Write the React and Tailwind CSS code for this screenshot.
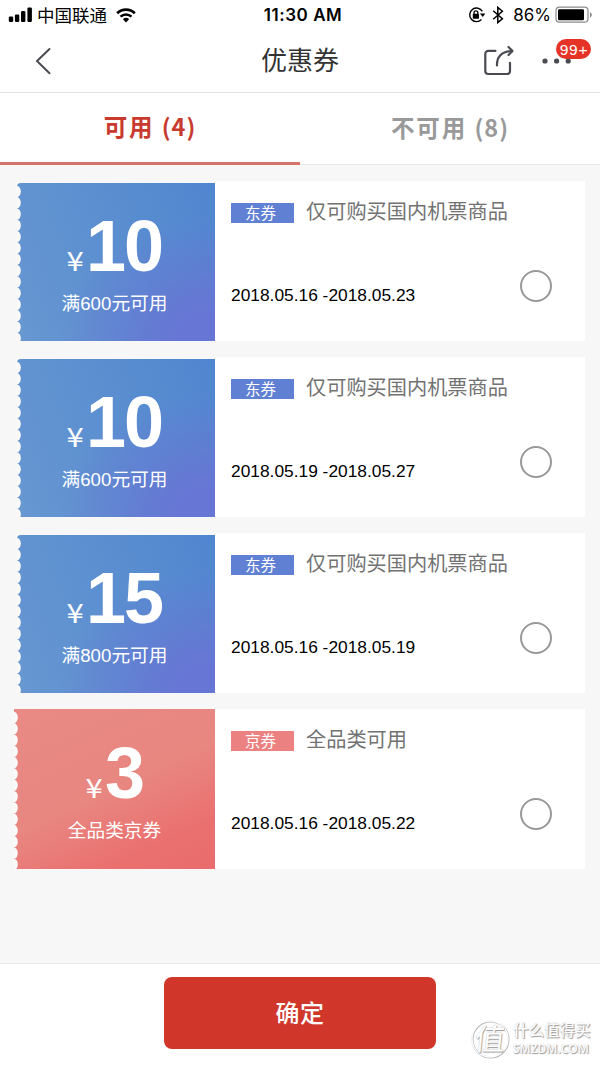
import React, { useState } from 'react';

const coupons = [
  { id: 1, kind: 'dong', amount: '10', rule: '满600元可用', tag: '东券', title: '仅可购买国内机票商品', date: '2018.05.16 -2018.05.23' },
  { id: 2, kind: 'dong', amount: '10', rule: '满600元可用', tag: '东券', title: '仅可购买国内机票商品', date: '2018.05.19 -2018.05.27' },
  { id: 3, kind: 'dong', amount: '15', rule: '满800元可用', tag: '东券', title: '仅可购买国内机票商品', date: '2018.05.16 -2018.05.19' },
  { id: 4, kind: 'jing', amount: '3', rule: '全品类京券', tag: '京券', title: '全品类可用', date: '2018.05.16 -2018.05.22' },
];

const ticketStyles = {
  dong: 'ml-[17px] mt-[2px] w-[198px] h-[158px] pt-[28px] pr-[3px] rounded-tl-[4px] bg-[radial-gradient(ellipse_at_100%_100%,#6776d4_0%,#6776d4_14%,#6776d400_56%),linear-gradient(70deg,#6897d1_0%,#5b8fd0_50%,#5086cf_100%)]',
  jing: 'ml-[14px] w-[201px] h-[160px] pt-[29px] bg-[linear-gradient(155deg,#e98a84_0%,#e88680_50%,#ea706f_80%,#ea6c6e_100%)]',
};

const tagStyles = {
  dong: 'bg-[#5f80d3]',
  jing: 'bg-[#eb8281]',
};

function StatusBar() {
  return (
    <div className="h-[30px] flex items-center justify-between pl-[8px] pr-[7px] text-black">
      <div className="flex items-center w-[200px]">
        <svg width="25" height="16" viewBox="0 0 25 16" fill="#000">
          <rect x="0.8" y="9.5" width="4.4" height="5.5" rx="1.2" />
          <rect x="6.9" y="7.5" width="4.4" height="7.5" rx="1.2" />
          <rect x="13" y="4" width="4.4" height="11" rx="1.2" />
          <rect x="19.4" y="0.5" width="4.5" height="14.5" rx="1.2" />
        </svg>
        <span className="ml-[4px] text-[17.5px] leading-none -mt-px">中国联通</span>
        <svg className="ml-[9px]" width="20" height="15" viewBox="0 0 20 15">
          <path d="M1.2 5.2a12.6 12.6 0 0 1 17.6 0" fill="none" stroke="#000" strokeWidth="2.7" />
          <path d="M4.5 8.7a7.9 7.9 0 0 1 11 0" fill="none" stroke="#000" strokeWidth="2.5" />
          <path d="M6.9 11.2a4.5 4.5 0 0 1 6.2 0L10 14.5z" fill="#000" />
        </svg>
      </div>
      <div className="pl-[5px] pt-[2px] font-['Inter','Liberation_Sans',sans-serif] font-semibold text-[17px] tracking-[0.55px] whitespace-nowrap">11:30 AM</div>
      <div className="flex items-center justify-end w-[200px]">
        <svg width="18" height="18" viewBox="0 0 18 18">
          <path d="M14.4 5.4A6.8 6.8 0 1 0 13.4 13.6" fill="none" stroke="#000" strokeWidth="1.4" />
          <path d="M11.8 7.4h5.6L14.8 11z" fill="#000" />
          <rect x="4.8" y="7.8" width="6.2" height="4.9" rx="0.6" fill="#000" />
          <path d="M6 8V6.8a1.9 1.9 0 0 1 3.8 0V8" fill="none" stroke="#000" strokeWidth="1.3" />
        </svg>
        <svg className="ml-[6px]" width="12" height="18" viewBox="0 0 12 18" fill="none" stroke="#000" strokeWidth="1.5">
          <path d="M1.2 4.8l9.2 8-4.6 3.8V1.4l4.6 3.8-9.2 8" />
        </svg>
        <span className="ml-[9px] pt-px font-['Inter','Liberation_Sans',sans-serif] text-[17px]">86%</span>
        <svg className="ml-[4px]" width="38" height="18" viewBox="0 0 38 18">
          <rect x="1" y="1.2" width="32" height="15" rx="3.4" fill="none" stroke="#8c8c8c" strokeWidth="1.2" />
          <rect x="3" y="3.2" width="26" height="11" rx="1.2" fill="#000" />
          <path d="M35 6.2c2.4 1 2.4 4.2 0 5.2z" fill="#8c8c8c" />
        </svg>
      </div>
    </div>
  );
}

function NavBar() {
  return (
    <div className="h-[63px] border-b border-[#e3e3e3] flex items-center justify-between">
      <div className="w-[150px] pl-[34px]">
        <svg width="18" height="28" viewBox="0 0 18 28" fill="none" stroke="#4a4b52" strokeWidth="2">
          <path d="M15.5 2L3 14l12.5 12.3" strokeLinecap="round" />
        </svg>
      </div>
      <h1 className="text-[26px] leading-none text-[#333] -mt-[4px]">优惠券</h1>
      <div className="w-[150px] relative flex items-center pl-[33px]">
        <svg width="32" height="32" viewBox="0 0 32 32" fill="none" stroke="#4a4b52" strokeWidth="2.2" strokeLinecap="round">
          <path d="M12.5 5.8H5.3a3 3 0 0 0-3 3V26a3 3 0 0 0 3 3H24a3 3 0 0 0 3-3V17.8" />
          <path d="M14 20.5C13.6 12 18.5 6.3 28.6 6" />
          <path d="M25.5 2L29.5 6l-4 4" strokeLinejoin="round" />
        </svg>
        <svg className="ml-[26px]" width="32" height="6" viewBox="0 0 32 6" fill="#4a4b52">
          <circle cx="4" cy="3" r="2.6" />
          <circle cx="15.6" cy="3" r="2.6" />
          <circle cx="27.2" cy="3" r="2.6" />
        </svg>
        <span className="absolute left-[106px] top-[-6px] w-[35px] h-[20px] pl-px rounded-full bg-[#e53427] text-white text-center leading-[21px] font-['Liberation_Sans',Arial,sans-serif] text-[15.5px] tracking-[0.7px]">
          99+
        </span>
      </div>
    </div>
  );
}

function Tabs({ active, onChange }) {
  const base = 'flex-1 text-[23.5px] font-bold tracking-[1.9px] leading-none';
  const on = 'h-[72px] pb-[2px] -mb-px text-[#c93a2e] border-b-[3px] border-[#d6736a]';
  const off = 'h-full pb-[2px] text-[#999]';
  return (
    <div className="h-[72px] flex border-b border-[#e9e9e9] bg-white">
      <button className={`${base} ${active === 'usable' ? on : off}`} onClick={() => onChange('usable')}>
        可用 <span className="tracking-[1px]">(4)</span>
      </button>
      <button className={`${base} ${active === 'unusable' ? on : off}`} onClick={() => onChange('unusable')}>
        不可用 <span className="tracking-[1px]">(8)</span>
      </button>
    </div>
  );
}

// Perforated left edge of a coupon
function Perforation() {
  const holes = Array.from({ length: 14 }, (_, i) => 8.5 + i * 11.3);
  return (
    <svg className="absolute left-0 top-0" width="5" height="160" viewBox="0 0 5 160" fill="#f9f9f9">
      {holes.map((y) => (
        <ellipse key={y} cx="-0.4" cy={y} rx="4.2" ry="5.7" />
      ))}
    </svg>
  );
}

function Coupon({ item, checked, onSelect }) {
  return (
    <div className="h-[160px] flex pr-[15px]">
      <div className={`relative shrink-0 overflow-hidden text-white flex flex-col items-center ${ticketStyles[item.kind]}`}>
        <Perforation />
        <div className="flex items-baseline leading-none">
          <span className="text-[27px] leading-none w-[20px] mr-px -ml-[2px] flex justify-center scale-x-115">¥</span>
          <span className="font-['Liberation_Sans',Arial,sans-serif] font-bold text-[72px] leading-[70px] tracking-[-2px]">{item.amount}</span>
        </div>
        <div className="mt-[12px] font-['Liberation_Sans','Noto_Sans_CJK_SC',sans-serif] text-[18.7px] leading-[22px]">{item.rule}</div>
      </div>
      <div className="flex-1 bg-white flex flex-col pl-[16px] pt-[16px]">
        <div className="flex items-center h-[28px]">
          <span className={`w-[63px] h-[20px] text-white text-[15.5px] leading-[18px] text-center pr-[4px] mt-[3px] ${tagStyles[item.kind]}`}>
            {item.tag}
          </span>
          <span className="ml-[12px] text-[20.2px] leading-none text-[#727272]">{item.title}</span>
        </div>
        <div className="flex justify-between items-start pr-[33px] mt-[44px]">
          <span className="font-['Liberation_Sans',Arial,sans-serif] text-[17.35px] leading-[20px] mt-[16px] text-black">{item.date}</span>
          <button
            className={`w-[32px] h-[32px] mt-[0.5px] rounded-full border-2 border-[#999] ${checked ? 'bg-[#d0372a]' : 'bg-white'}`}
            onClick={onSelect}
            aria-label={item.title}
          />
        </div>
      </div>
    </div>
  );
}

function Watermark() {
  return (
    <div className="absolute left-[470px] top-[54px] w-[130px] h-[42px] flex items-center text-[#fdfdfd] [text-shadow:1px_1px_1px_#999,0_0_1px_#bbb]">
      <div className="relative w-[40px] h-[40px] flex items-center justify-center">
        <svg className="absolute inset-0" width="40" height="40" viewBox="0 0 40 40" fill="none">
          <circle cx="20.5" cy="20.5" r="18" stroke="#b5b5b5" strokeWidth="2" />
          <circle cx="20" cy="20" r="18" stroke="#fff" strokeWidth="1.4" />
        </svg>
        <span className="relative text-[30px] leading-none -skew-x-6 -mt-[4px]">值</span>
      </div>
      <div className="ml-[3px]">
        <div className="text-[15.5px] leading-[19px] font-medium whitespace-nowrap">什么值得买</div>
        <div className="font-['Open_Sans','Liberation_Sans',sans-serif] font-semibold text-[12px] leading-[20px] whitespace-nowrap">SMZDM.COM</div>
      </div>
    </div>
  );
}

export default function App() {
  const [tab, setTab] = useState('usable');
  const [selected, setSelected] = useState(null);

  return (
    <div className="w-[600px] h-[1067px] overflow-hidden bg-white flex flex-col font-['Noto_Sans_CJK_SC',sans-serif]">
      <StatusBar />
      <NavBar />
      <Tabs active={tab} onChange={setTab} />

      <div className="flex-1 bg-[#f7f7f7] pt-[16px] flex flex-col gap-[16px]">
        {coupons.map((item) => (
          <Coupon
            key={item.id}
            item={item}
            checked={selected === item.id}
            onSelect={() => setSelected(item.id)}
          />
        ))}
      </div>

      <div className="relative h-[104px] border-t border-[#ebebeb] bg-white pt-[13px] flex justify-center items-start">
        <button className="w-[272px] h-[72px] pb-[2px] rounded-[8px] bg-[#d0372a] text-white text-[24px] font-medium leading-none tracking-[0.5px]">
          确定
        </button>
        <Watermark />
      </div>
    </div>
  );
}
